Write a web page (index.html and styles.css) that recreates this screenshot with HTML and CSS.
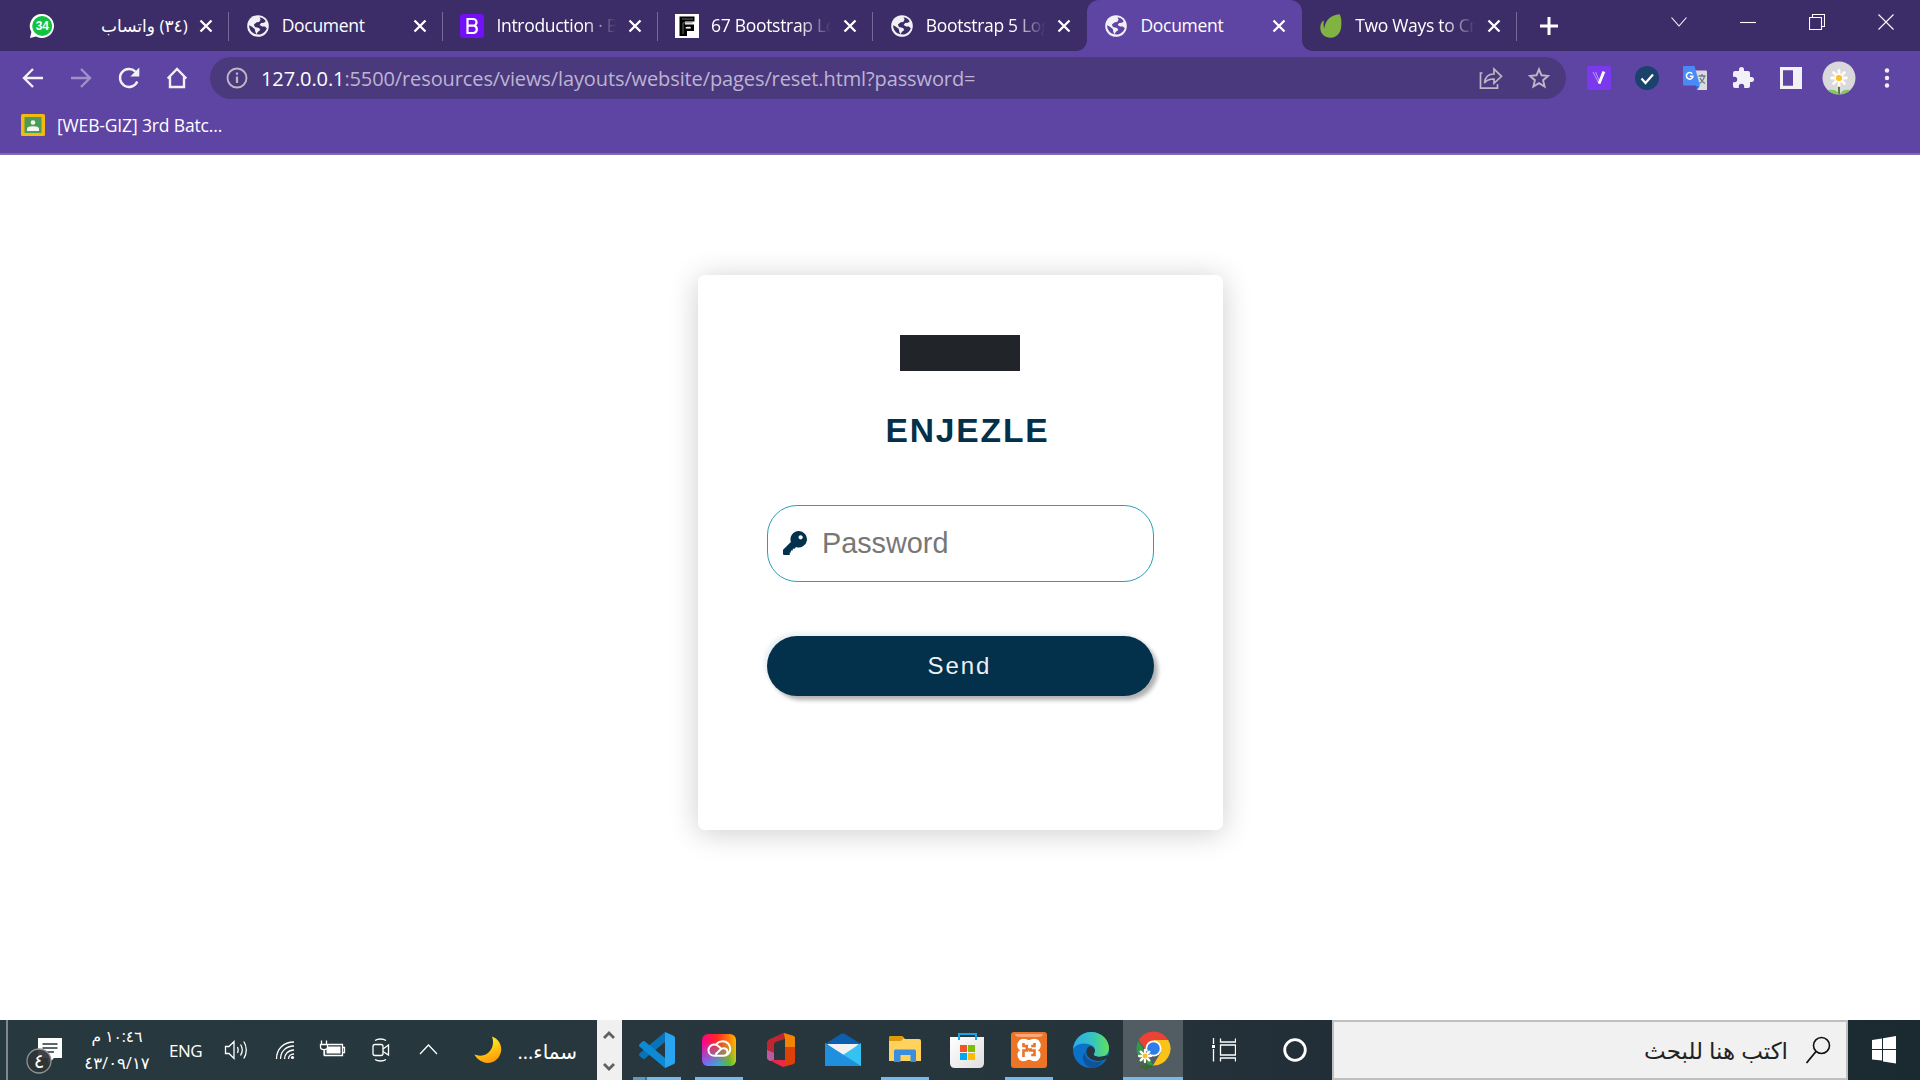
FILE: index.html
```html
<!DOCTYPE html>
<html lang="en">
<head>
<meta charset="utf-8">
<title>Document</title>
<link rel="stylesheet" href="styles.css">
</head>
<body>
<svg class="defs" width="0" height="0">
  <symbol id="globe" viewBox="0 0 24 24">
    <circle cx="12" cy="12" r="10.800" fill="#f1f1f5"/>
    <path d="M13.500 3.200c2.700.4 5 1.800 6.200 4.100l-1.700 1.500-2.900.2-1.500 2.100 2.600 1.400h2.700l1.900 1.700c-.7 2.700-3.300 5.500-6.700 6.300l-3.700-.2 1.600-2.500 2.300-1.700-1.200-2.200-4.200-1-1-2.400 2.800-2.200 2.500-.3 1.400-2.600zM3.100 11.300l2.500 1.200 3.200 2.500.5 2.700 1.100 2.600C6.200 19.600 3.200 16.200 3.100 11.300z" fill="currentColor"/>
  </symbol>
  <symbol id="close" viewBox="0 0 14 14"><path d="M1.500 1.500l11 11M12.500 1.500l-11 11" stroke="#fff" stroke-width="2.300" fill="none"/></symbol>
  <symbol id="daisy" viewBox="0 0 24 24">
    <g stroke="#fffdf6" stroke-width="3.400" stroke-linecap="round"><path d="M12 3v18M3 12h18M5.500 5.500l13 13M18.500 5.500l-13 13"/></g>
    <circle cx="12" cy="12" r="3.700" fill="#fbc02d"/>
  </symbol>
</svg>

<header class="tabs">
  <div class="tab tab-rtl">
    <svg width="26" height="26" viewBox="0 0 26 26"><path d="M13 1a12 12 0 1 1-6 22.400L1 25l1.400-6A12 12 0 0 1 13 1z" fill="#fff"/><circle cx="13.200" cy="13" r="10" fill="#12c142"/><text x="13.200" y="17.200" class="badge34" text-anchor="middle">34</text></svg>
    <span class="label" dir="rtl">(٣٤) واتساب</span>
    <svg class="x" width="14" height="14"><use href="#close"/></svg>
  </div>
  <div class="tab">
    <svg class="globe" width="24" height="24"><use href="#globe"/></svg>
    <span class="label">Document</span>
    <svg class="x" width="14" height="14"><use href="#close"/></svg>
  </div>
  <div class="tab">
    <svg width="24" height="24" viewBox="0 0 24 24"><rect width="24" height="24" rx="3" fill="#7410f8"/><path d="M7.500 5h5.700a3.300 3.300 0 0 1 0 6.700H7.500zM7.500 11.700h6.200a3.700 3.700 0 0 1 0 7.300H7.500z" fill="none" stroke="#fff" stroke-width="2.200"/></svg>
    <span class="label fade">Introduction · B</span>
    <svg class="x" width="14" height="14"><use href="#close"/></svg>
  </div>
  <div class="tab">
    <svg width="24" height="24" viewBox="0 0 24 24"><path fill="#fff" d="M0 0h24v24H0z"/><path d="M4.500 2.500h15v5H10v3h9v6.500h-7V22H4.500z" fill="#000"/><path d="M7 5h11M8 20V8.800h9.500M12 13h3.500" stroke="#777" stroke-width=".9" fill="none"/><path d="M10.700 13.800h5" stroke="#fff" stroke-width="1.500"/></svg>
    <span class="label fade">67 Bootstrap Lo</span>
    <svg class="x" width="14" height="14"><use href="#close"/></svg>
  </div>
  <div class="tab no-line">
    <svg class="globe" width="24" height="24"><use href="#globe"/></svg>
    <span class="label fade">Bootstrap 5 Log</span>
    <svg class="x" width="14" height="14"><use href="#close"/></svg>
  </div>
  <div class="tab active no-line">
    <svg class="globe" width="24" height="24"><use href="#globe"/></svg>
    <span class="label">Document</span>
    <svg class="x" width="14" height="14"><use href="#close"/></svg>
  </div>
  <div class="tab">
    <svg width="24" height="24" viewBox="0 0 24 24"><path d="M20.500.3c1.700 2 2.300 7.700 1.700 12.700-.7 6-4.500 10.500-10.100 10.700C6 23.900 1.300 20 1.300 13.700c0-2.500.8-5 2.500-6.700.7-.5 1.200-.2 1 .7-.4 2.300-.3 4.800.6 6.800C6 7 11.500 1 20.500.3z" fill="#80b341"/></svg>
    <span class="label fade">Two Ways to Cr</span>
    <svg class="x" width="14" height="14"><use href="#close"/></svg>
  </div>
  <svg class="plus" width="20" height="20" viewBox="0 0 20 20"><path d="M10 1v18M1 10h18" stroke="#fff" stroke-width="3"/></svg>
  <div class="window-controls">
    <svg width="16" height="16" viewBox="0 0 16 16"><path d="M.5 3.500L8 12l7.500-8.500"/></svg>
    <svg width="16" height="16" viewBox="0 0 16 16"><path d="M0 8.500h16"/></svg>
    <svg width="16" height="16" viewBox="0 0 16 16"><path d="M.5 3.500h12v12H.5zM3.500 3.500V.5h12v12h-3"/></svg>
    <svg width="16" height="16" viewBox="0 0 16 16"><path d="M.5.5l15 15M15.500.5l-15 15"/></svg>
  </div>
</header>

<nav class="toolbar">
  <div class="nav-icons">
    <svg width="24" height="24" viewBox="0 0 24 24"><path d="M22 12H3.500M12 3L3 12l9 9" class="stroke"/></svg>
    <svg class="dim" width="24" height="24" viewBox="0 0 24 24"><path d="M2 12h18.500M12 3l9 9-9 9" class="stroke"/></svg>
    <svg width="24" height="24" viewBox="0 0 24 24"><path d="M20.300 15.500A9 9 0 1 1 18.500 5.700" class="stroke"/><path d="M22.300 1.500v9h-9z" fill="#f1f1f6"/></svg>
    <svg width="24" height="24" viewBox="0 0 24 24"><path d="M5 11v10h14V11M2.700 12.500L12 3l9.300 9.500" class="stroke"/></svg>
  </div>
  <div class="omnibox">
    <svg width="22" height="22" viewBox="0 0 22 22"><circle cx="11" cy="11" r="9.500" fill="none" stroke="#bcb8c6" stroke-width="1.900"/><path d="M11 9.500v6.500M11 5.500v2.200" stroke="#bcb8c6" stroke-width="2.200"/></svg>
    <span class="url"><b>127.0.0.1</b>:5500/resources/views/layouts/website/pages/reset.html?password=</span>
    <svg width="24" height="24" viewBox="0 0 24 24"><path d="M3.500 7H1.500v15.200h17v-4M5.500 17c.5-6 4-9 9.500-9V3l7.500 7.300-7.500 7V13c-4.500 0-7.500 1-9.500 4z" fill="none" stroke="#bcb8c6" stroke-width="1.700"/></svg>
    <svg width="24" height="24" viewBox="0 0 24 24"><path d="M12 3.300l2.500 6 6.500.6-4.900 4.300 1.500 6.400-5.600-3.400-5.600 3.400 1.500-6.400L3 9.900l6.500-.6z" fill="none" stroke="#bcb8c6" stroke-width="1.900"/></svg>
  </div>
  <div class="extensions">
    <svg width="24" height="24" viewBox="0 0 24 24"><rect width="24" height="24" rx="2" fill="#7b39ee"/><path d="M6 6l6.200 12L18 6" fill="none" stroke="#b99af5" stroke-width="1"/><path d="M8.500 6l4 9" stroke="#b99af5"/><path d="M16.800 5.500l-4.700 12" stroke="#fff" stroke-width="2.800"/></svg>
    <svg width="24" height="24" viewBox="0 0 24 24"><circle cx="12" cy="12" r="12" fill="#1a426c"/><path d="M6.500 12.500l4 4.500L18 8.500" fill="none" stroke="#fff" stroke-width="2.200"/></svg>
    <svg width="24" height="24" viewBox="0 0 24 24"><path d="M11 4.500h12a1 1 0 0 1 1 1V24H14z" fill="#d9dbe0"/><path d="M15.500 10h7M19 8v2M21.500 10c-.5 3-3 6-5 7.500M17 12c1 2 3 4.500 5 5.500" stroke="#637986" stroke-width="1.300" fill="none"/><path d="M12 19.500h5L14 24z" fill="#3267d6"/><path d="M1 0h10.500L17 19.500H1a1 1 0 0 1-1-1V1a1 1 0 0 1 1-1z" fill="#4a8af4"/><path d="M9.300 7.700A3.300 3.300 0 1 0 10 10.200H6.800" stroke="#fff" stroke-width="1.600" fill="none"/></svg>
    <svg width="24" height="24" viewBox="0 0 24 24"><path d="M20.500 11H19V7a2 2 0 0 0-2-2h-4V3.500a2.500 2.500 0 0 0-5 0V5H4a2 2 0 0 0-2 2v3.800h1.500a2.700 2.700 0 0 1 0 5.400H2V20a2 2 0 0 0 2 2h3.800v-1.500a2.700 2.700 0 0 1 5.400 0V22H17a2 2 0 0 0 2-2v-4h1.500a2.500 2.500 0 0 0 0-5z" fill="#f1f1f6"/></svg>
    <svg width="24" height="24" viewBox="0 0 24 24"><path d="M1 1h22v22H1zM4 4.300v15.400h10V4.300z" fill="#f1f1f6" fill-rule="evenodd"/></svg>
    <svg class="avatar" width="34" height="34" viewBox="0 0 34 34"><clipPath id="round"><circle cx="17" cy="17" r="16.500"/></clipPath><g clip-path="url(#round)"><path fill="#d9d8da" d="M0 0h34v34H0z"/><path d="M17 18v16" stroke="#557c35" stroke-width="2"/><path d="M17 33c-2-4-6-5-11-4l3 5zM18 33c2-4 6-5 10-4l-3 5z" fill="#86c45d"/><use href="#daisy" x="7" y="7" width="20" height="20"/></g></svg>
    <svg width="24" height="24" viewBox="0 0 24 24"><g fill="#f1f1f6"><circle cx="12" cy="4.500" r="2.200"/><circle cx="12" cy="12" r="2.200"/><circle cx="12" cy="19.500" r="2.200"/></g></svg>
  </div>
</nav>

<div class="bookmarks">
  <svg width="24" height="22" viewBox="0 0 24 22"><rect width="24" height="22" rx="1.500" fill="#f3b90f"/><path fill="#4c9c57" d="M3.500 3h17v16h-17z"/><circle cx="12" cy="8.500" r="2.300" fill="#f2f7f2"/><path d="M6 17v-2.500c0-3 12-3 12 0V17z" fill="#f2f7f2"/></svg>
  <span>[WEB-GIZ] 3rd Batc...</span>
</div>

<main class="page">
  <form class="card">
    <div class="logo"></div>
    <div class="name">ENJEZLE</div>
    <div class="field">
      <svg width="24" height="24" viewBox="0 0 512 512"><path d="M336 0a176 176 0 1 1-59 342l-29 34h-40v40h-40v40h-24v56H24a24 24 0 0 1-24-24v-78a24 24 0 0 1 7-17l161-161A176 176 0 0 1 336 0zm40 88a46 46 0 1 0 0 92 46 46 0 0 0 0-92z" fill="#03304a" fill-rule="evenodd"/></svg>
      <input type="password" placeholder="Password">
    </div>
    <button type="button" class="send">Send</button>
  </form>
</main>

<footer class="taskbar">
  <div class="tray">
    <svg class="notif" width="62" height="60" viewBox="0 0 62 60"><path d="M30 18h24v20h-8l-6 6v-6H30z" fill="#fff"/><path d="M34.500 24h15M34.500 28h15M38 32h8" stroke="#27363d" stroke-width="1.200"/><circle cx="31" cy="41" r="12" fill="#303436" fill-opacity=".93" stroke="#8e9496" stroke-width="1.300"/><text x="31" y="48" text-anchor="middle" class="count">٤</text></svg>
    <div class="clock" dir="rtl"><span class="time">١٠:٤٦ م</span><span class="date">٤٣/٠٩/١٧</span></div>
    <div class="lang">ENG</div>
    <svg width="52" height="24" viewBox="0 0 52 24"><path d="M16.500 8.500h3.500l5-5v17l-5-5h-3.500zM28.500 9c1 2 1 4 0 6M31.500 6.500c2.300 3.500 2.300 7.500 0 11M34.800 3.500c3.300 5 3.300 12 0 17"/></svg>
    <svg width="48" height="24" viewBox="0 0 48 24"><path d="M15.500 21C15.500 11 22.500 4 33 4M19.500 21c0-7 5-13 13.500-13M23.500 21c0-4.500 3.500-9 9.500-9M27.500 21c0-2.500 2-5 5.500-5"/><circle cx="31.500" cy="19.500" r="1.600" fill="#fff" stroke="none"/></svg>
    <svg width="48" height="24" viewBox="0 0 48 24"><path d="M15.500 12v5.500h18v-11H19M33.500 9.500h2v5h-2M12.500 2.500v4M17.500 2.500v4M11.500 6.500h7v2.500c0 3.500-7 3.500-7 0zM15 12v5.500"/><path d="M18.500 8.500h13v7h-14v-3.500z" fill="#fff" stroke="none"/></svg>
    <svg width="48" height="24" viewBox="0 0 48 24"><rect x="16" y="6.500" width="10" height="11" rx="2"/><path d="M26 11l5.500-4v10L26 13.500M18 2.500c3-2 8-2 11 0M18 21.500c3 2 8 2 11 0"/></svg>
    <svg width="48" height="24" viewBox="0 0 48 24"><path d="M15 16l8.500-9 8.500 9" stroke-width="1.600"/></svg>
    <div class="weather">
      <svg width="28" height="28" viewBox="0 0 28 28"><defs><linearGradient id="moon" x2=".4" y2="1"><stop offset=".4" stop-color="#ffe018"/><stop offset="1" stop-color="#ff9f0c"/></linearGradient></defs><path d="M18 .5c7 2.500 10.500 9.500 8.800 16C24.500 25 16 29 9 26 4.500 24 2 21.500.5 18.500 5 20.500 10.500 20 14.500 16.500c4.700-4 5.500-10.500 3.500-16z"/></svg>
      <span dir="rtl">سماء...</span>
    </div>
  </div>
  <div class="scroller">
    <svg width="12" height="10" viewBox="0 0 12 10"><path d="M1 8l5-5 5 5"/></svg>
    <svg width="12" height="10" viewBox="0 0 12 10"><path d="M1 2l5 5 5-5"/></svg>
  </div>
  <div class="apps">
    <div class="app running multi"><svg width="36" height="36" viewBox="0 0 36 36"><path d="M26 0v10L6 26.500c-1 .8-2 .6-2.800-.2L.7 24c-.9-.8-.9-2 0-2.800z" fill="#0a73b7"/><path d="M26 36V26L6 9.500c-1-.8-2-.6-2.800.2L.7 12c-.9.8-.9 2 0 2.800z" fill="#0d8ad3"/><path d="M26 0l8.500 3.700c.9.500 1.500 1.200 1.500 2.300v24c0 1.100-.6 1.800-1.500 2.300L26 36z" fill="#29a5f0"/></svg></div>
    <div class="app running"><svg width="34" height="34" viewBox="0 0 34 34"><defs><linearGradient id="cc1"><stop stop-color="#ff0090"/><stop offset=".45" stop-color="#ff2a20"/><stop offset="1" stop-color="#ffb400"/></linearGradient><linearGradient id="cc2"><stop stop-color="#7a65ff"/><stop offset=".45" stop-color="#35a8ee"/><stop offset=".8" stop-color="#45c33c"/><stop offset="1" stop-color="#a7d728"/></linearGradient><linearGradient id="fadeY" x2="0" y2="1"><stop offset=".25" stop-color="#000"/><stop offset=".95" stop-color="#fff"/></linearGradient><mask id="ccm"><path d="M0 0h34v34H0z" fill="url(#fadeY)"/></mask></defs><rect width="34" height="32" y="1" rx="6" fill="url(#cc1)"/><rect width="34" height="32" y="1" rx="6" fill="url(#cc2)" mask="url(#ccm)"/><path d="M14 21l4.500-4.500c3-2.500 7-1 7 2.300 0 2.500-1.800 4-4.300 4H12.500c-3.700 0-6-2.600-6-5.600s2.500-5.600 5.800-5.600c2 0 3.500.8 4.800 2.100l1.600 1.600M14.500 11C16 9.300 18 8.300 20.500 8.300c4.500 0 7.800 3.300 7.800 7.500 0 4-3 7-6.800 7" fill="none" stroke="#fff" stroke-width="2" stroke-linecap="round"/></svg></div>
    <div class="app"><svg width="28" height="34" viewBox="0 0 28 34"><path d="M16 0L3 6C1 7 0 8 0 10v15c1 3 4 4 7 2V12c0-2 1-3 3-3.600l8-2.400z" fill="#bd2732"/><path d="M0 17v8c1 3 4 4 7 2v-7z" fill="#bb5b9d"/><path d="M16 0l10 2.800c1.300.4 2 1.200 2 2.500v23.400c0 1.300-.7 2.100-2 2.500L16 34l2-5V6z" fill="#dc4207"/><path d="M17 0l9 2.800c1.300.4 2 1.200 2 2.500V14H18V6z" fill="#f28304"/><path d="M18 27v5l-2 2-10-5c-1.500-1-1-2 .5-2z" fill="#ee2647"/></svg></div>
    <div class="app"><svg width="36" height="34" viewBox="0 0 36 34"><path d="M0 11L16 1q2-1.200 4 0l16 10-10 8H9z" fill="#0b5fae"/><path d="M2 11h32L20 24h-6z" fill="#f2f2f2"/><path d="M0 10l18 12L36 10v23H0z" fill="#35c2f2"/><path d="M0 10l36 23H0z" fill="#1e90dd"/></svg></div>
    <div class="app running"><svg width="32" height="28" viewBox="0 0 32 28"><path d="M0 2q0-2 2-2h11l3 3h14q2 0 2 2v20H0z" fill="#ffd25e"/><path d="M0 2q0-2 2-2h11l2 2-3 3H0z" fill="#dd9b0b"/><path d="M5 26V15q0-1.500 1.500-1.500h19Q27 13.500 27 15v11h-5.500v-7h-10v7z" fill="#3b8ede"/></svg></div>
    <div class="app"><svg width="36" height="36" viewBox="0 0 36 36"><defs><linearGradient id="bag" x2="1" y2="1"><stop stop-color="#fff"/><stop offset="1" stop-color="#dfdfe0"/></linearGradient></defs><path d="M1 5h34v26q0 5-5 5H6q-5 0-5-5z" fill="url(#bag)"/><path d="M10 8V2h17v6" fill="none" stroke="#15a4ef" stroke-width="2"/><path fill="#f35325" d="M11 13h7v7h-7z"/><path fill="#81bc06" d="M19 13h7v7h-7z"/><path fill="#05a6f0" d="M11 21h7v7h-7z"/><path fill="#ffba08" d="M19 21h7v7h-7z"/></svg></div>
    <div class="app running"><svg width="36" height="36" viewBox="0 0 36 36"><rect width="36" height="36" rx="3" fill="#ec7424"/><path d="M4 2h28q0 3-5 3H9Q4 5 4 2z" fill="#fba77a"/><path d="M9.500 10c3-3 6 0 8.500 0s5.500-3 8.500 0c2.500 3 1 6-1.500 8 3 2.500 3.500 6 1 8.500-3 2.500-6-1-8-1s-5 3.500-8 1c-2.500-2.500-2-6 1-8.500-2.500-2-4-5-1.500-8z" fill="#fff" stroke="#fff" stroke-width="4"/><path d="M12.500 11v3h3.300v4.500h-3.300V25M15 17.500h6M23.500 11v3h-3.300M18 18.500h5.500V23h-3.300" fill="none" stroke="#ec7424" stroke-width="2.600"/></svg></div>
    <div class="app"><svg width="36" height="36" viewBox="0 0 36 36"><defs><linearGradient id="e1"><stop stop-color="#2bacea"/><stop offset=".55" stop-color="#35c5bd"/><stop offset="1" stop-color="#61e05a"/></linearGradient></defs><circle cx="18" cy="18" r="18" fill="#0c72c9"/><path d="M0 17C1 7 9 0 18 0c11 0 18 8 18 16 0 6-4 9-9 9-4 0-7-1.500-6-3.500 2-3 1-6-2-8C13 10 4 11 0 17z" fill="url(#e1)"/><path d="M12 20c0 8 9 12 18 9-3 5-8 7-12 7-6-2-9-8-8-12z" fill="#10539d"/><path d="M17 14c-5 2-5 9 0 12.500 5 3.500 12 3 18-.5l2-3-6 1c-5 2-12 0-10-2.500 2.500-3 0-7-4-7.500z" fill="#27363e"/></svg></div>
    <div class="app running current"><svg width="36" height="40" viewBox="0 0 36 40"><path d="M3.800 10A17 17 0 0 1 33.200 10L18.500 18z" fill="#ea4335"/><path d="M3.300 11L11 23l7.500 12.500A17 17 0 0 1 3.300 11z" fill="#2c9e4b"/><path d="M18.500 10h14.700A17 17 0 0 1 18 35.500L26 22z" fill="#fbc21a"/><path d="M3.800 10h14.700v9l-7 2z" fill="#ea4335"/><circle cx="18.500" cy="18.500" r="8" fill="#fff"/><circle cx="18.500" cy="18.500" r="6.300" fill="#2f7de9"/><path d="M11 26v13M5 37q4-1 6 2 2-3 6-2" stroke="#3a6a26" stroke-width="2" fill="none"/><circle cx="10" cy="26" r="5" fill="#776b54"/><use href="#daisy" x="2" y="18" width="16" height="16"/></svg></div>
    <div class="app wide"><svg width="24" height="24" viewBox="0 0 24 24"><path d="M1.500 0v6M1.500 11v12.500M8.500.500v3.500h15V.500M8.500 7h15v10h-15zM8.500 23.500V20h15v3.500" fill="none" stroke="#fff" stroke-width="1.300"/><path d="M0 7h3v3H0z" fill="#fff"/></svg></div>
    <div class="app"><svg width="24" height="24" viewBox="0 0 24 24"><circle cx="12" cy="12" r="10.300" fill="none" stroke="#fff" stroke-width="2.800"/></svg></div>
  </div>
  <div class="search" dir="rtl">
    <svg width="26" height="28" viewBox="0 0 26 28"><circle cx="16.500" cy="9.500" r="8" fill="none" stroke="#111" stroke-width="1.600"/><path d="M11 15.500L1.500 27" stroke="#111" stroke-width="1.800"/></svg>
    <span>اكتب هنا للبحث</span>
  </div>
  <div class="start"><svg width="24" height="28" viewBox="0 0 24 28"><path d="M0 4l10-1.600V13H0zM11 2.200L24 0v13H11zM0 14h10v10.600L0 23.500zM11 14h13v13.500l-13-2z" fill="#fff"/></svg></div>
</footer>
</body>
</html>
```
FILE: styles.css
```css
* { box-sizing: border-box; }

body {
  margin: 0;
  width: 1920px;
  height: 1080px;
  overflow: hidden;
  display: flex;
  flex-direction: column;
  background: #fff;
  font-family: "Open Sans", "DejaVu Sans", sans-serif;
  color: #fff;
}

svg { display: block; flex: none; }
.defs { position: absolute; }

/* Tab strip */
.tabs {
  height: 51px;
  display: flex;
  align-items: center;
  padding-left: 14px;
  background: #3c2d68;
}
.tab {
  width: 214.7px;
  height: 51px;
  padding: 0 16px 0 17px;
  display: flex;
  align-items: center;
  position: relative;
  font-size: 17.500px;
  letter-spacing: -0.3px;
}
.tab:not(.no-line)::after {
  content: "";
  position: absolute;
  right: 0;
  top: 12px;
  width: 1px;
  height: 29px;
  background: #75699a;
}
.tab .label {
  flex: 1;
  margin: -1px 4px 0 12px;
  white-space: nowrap;
}
.tab-rtl { padding-left: 15px; }
.tab-rtl .label { margin-right: 11px; font-size: 17px; }
.tab .fade {
  -webkit-mask-image: linear-gradient(90deg, #000 calc(100% - 40px), transparent calc(100% - 8px));
  mask-image: linear-gradient(90deg, #000 calc(100% - 40px), transparent calc(100% - 8px));
}
.globe { color: #3c2d68; }
.active .globe { color: #5e44a3; }
.badge34 { font: bold 12px "Liberation Sans", sans-serif; fill: #fff; }
.active { background: #5e44a3; border-radius: 12px 12px 0 0; }
.active::before {
  content: "";
  position: absolute;
  left: -10px;
  right: -10px;
  bottom: 0;
  height: 10px;
  background:
    radial-gradient(circle at 0 0, transparent 9.500px, #5e44a3 10px) left / 10px 10px no-repeat,
    radial-gradient(circle at 100% 0, transparent 9.500px, #5e44a3 10px) right / 10px 10px no-repeat;
}
.plus { margin-left: 22.500px; }
.window-controls {
  margin: 0 26px 8px auto;
  display: flex;
  gap: 53px;
}
.window-controls path { fill: none; stroke: #fff; stroke-width: 1.1; }

/* Toolbar */
.toolbar {
  height: 54px;
  display: flex;
  align-items: center;
  background: #5e44a3;
  padding-left: 21px;
}
.nav-icons { display: flex; gap: 24px; width: 189px; }
.stroke { fill: none; stroke: #f1f1f6; stroke-width: 2.4; }
.dim { opacity: .45; }
.omnibox {
  width: 1356px;
  height: 42px;
  border-radius: 21px;
  background: #4b397d;
  display: flex;
  align-items: center;
  gap: 24px;
  padding: 0 15px 0 16px;
}
.url {
  flex: 1;
  margin-left: -11px;
  font-size: 20px;
  letter-spacing: -0.110px;
  color: #bdb4d3;
  white-space: nowrap;
}
.url b { font-weight: 400; color: #fff; }
.extensions { display: flex; align-items: center; gap: 24px; margin-left: 21px; }
.avatar { margin: 0 -5px; }

.bookmarks {
  height: 50px;
  display: flex;
  align-items: center;
  gap: 12px;
  padding: 0 0 8px 21px;
  background: #5e44a3;
  border-bottom: 2px solid #8069b5;
  font-size: 17.500px;
  letter-spacing: -0.150px;
}

/* Reset form */
.page { flex: 1; padding-top: 120px; }
.card {
  width: 525px;
  height: 555px;
  margin-left: 698px;
  padding: 60px 69px;
  border-radius: 7px;
  background: #fff;
  box-shadow: 0 3px 30px rgba(0, 0, 0, .2);
  font-family: "Liberation Sans", sans-serif;
}
.logo { width: 120px; height: 36px; margin-left: 133px; background: #212529; }
.name {
  margin-top: 40px;
  padding-left: 14px;
  font-size: 33.600px;
  font-weight: 700;
  line-height: 40px;
  letter-spacing: 1.850px;
  text-align: center;
  color: #03304a;
}
.field {
  height: 77px;
  margin-top: 54px;
  border: 1px solid #2b9dbb;
  border-radius: 30px;
  display: flex;
  align-items: center;
  padding-left: 15px;
}
.field svg { margin-top: -1px; }
.field input {
  width: 300px;
  margin-left: 15px;
  padding: 0;
  border: 0;
  outline: 0;
  background: none;
  font: 28.800px "Liberation Sans", sans-serif;
}
.field input::placeholder { color: #777; }
.send {
  display: block;
  width: 100%;
  height: 60px;
  margin-top: 54px;
  padding: 0 2px 0 0;
  border: 0;
  border-radius: 30px;
  background: #03304a;
  color: #ecf0f3;
  font: 24px "Liberation Sans", sans-serif;
  letter-spacing: 1.950px;
  box-shadow: 4px 4px 4px #b1b1b1, -3px -3px 4px #e9eff3;
}

/* Taskbar */
.taskbar {
  height: 60px;
  display: flex;
  background: linear-gradient(90deg, #27383f 0, #27363d 50%, #222e37 70%, #1b2a30 100%);
}
.tray {
  width: 590.500px;
  margin-left: 6px;
  display: flex;
  align-items: center;
  border-left: 2px solid #7f898d;
}
.tray path, .tray rect { fill: none; stroke: #fff; stroke-width: 1.3; }
.tray .notif path:first-child { fill: #fff; stroke: none; }
.tray .notif path:nth-child(2) { stroke: #27363d; }
.tray path[fill="#fff"] { fill: #fff; stroke: none; }
.tray .weather path { fill: url(#moon); stroke: none; }
.count { font: 20px "DejaVu Sans", sans-serif; fill: #fff; }
.clock {
  width: 94px;
  display: flex;
  flex-direction: column;
  align-items: center;
  gap: 5px;
  line-height: 22px;
  padding-bottom: 2px;
}
.time { font-size: 15.500px; }
.date { font-size: 16.500px; }
.lang { width: 45px; padding-right: 2px; text-align: center; font-size: 17px; letter-spacing: -0.5px; }
.weather { margin-left: 20.500px; display: flex; align-items: center; gap: 16px; font-size: 20px; white-space: nowrap; }
.weather span { padding-top: 2px; }
.scroller {
  width: 25.500px;
  background: #f0f0f0;
  display: flex;
  flex-direction: column;
  align-items: center;
  justify-content: space-between;
  padding: 10px 0 8px;
}
.scroller path { fill: none; stroke: #606060; stroke-width: 2.8; }
.apps { width: 710px; padding-left: 4px; display: flex; }
.app {
  width: 62px;
  height: 60px;
  display: flex;
  align-items: center;
  justify-content: center;
  position: relative;
}
.running::after {
  content: "";
  position: absolute;
  left: 7px;
  right: 7px;
  bottom: 0;
  height: 3px;
  background: #76b9ed;
}
.multi::after { background: linear-gradient(90deg, #5a98c6 12px, #426f90 12px, #426f90 14px, #76b9ed 14px); }
.current { width: 60px; margin: 0 1px; background: #525c63; }
.current::after { left: 0; right: 0; }
.wide { width: 80px; }
.search {
  width: 516px;
  border: 2px solid #bfbfbf;
  background: #f1f1f1;
  display: flex;
  align-items: center;
  gap: 17px;
  padding-right: 15px;
  color: #222;
  font-size: 23px;
}
.start { flex: 1; display: flex; align-items: center; justify-content: center; }
```
